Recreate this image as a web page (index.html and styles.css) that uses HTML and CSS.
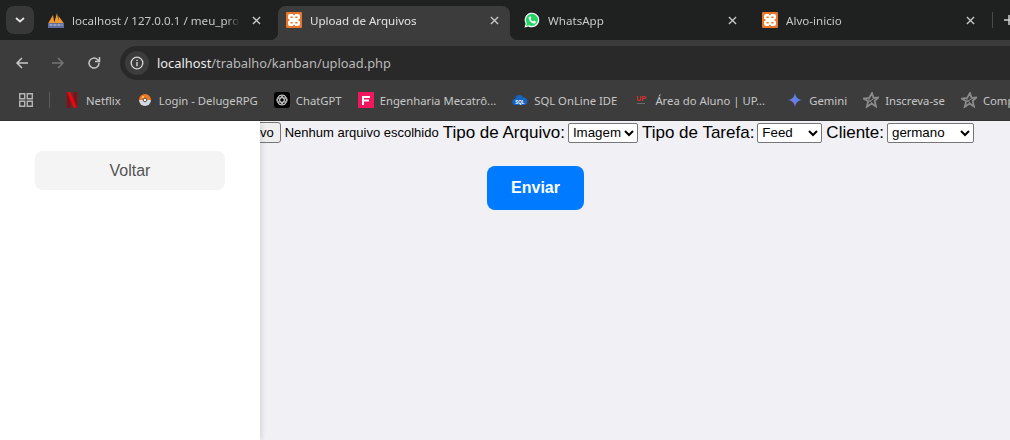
FILE: index.html
```html
<!DOCTYPE html>
<html lang="pt-BR">
<head>
    <meta charset="UTF-8">
    <meta name="viewport" content="width=device-width, initial-scale=1.0">
    <title>Upload de Arquivos</title>
    <link rel="stylesheet" href="styles.css">
</head>
<body>
    <svg class="defs" width="0" height="0">
        <symbol id="xampp" viewBox="0 0 16 16">
            <rect width="16" height="16" rx="1" fill="#e9762a"/>
            <path d="M4 2h2.500L8 3.500 9.500 2H12a2 2 0 0 1 2 2v2.500L12 8l2 1.500V12a2 2 0 0 1-2 2H9.500L8 12.500 6.500 14H4a2 2 0 0 1-2-2V9.500L4 8 2 6.500V4a2 2 0 0 1 2-2z" fill="#fff"/>
            <path d="M4.500 4.500h2.200v1.500H4.500zM9.300 4.500h2.200v1.500H9.300zM4.500 10h2.200v1.500H4.500zM9.300 10h2.200v1.500H9.300z" fill="#e9762a"/>
        </symbol>
        <symbol id="star" viewBox="0 0 16 16">
            <path d="M9 1l1.500 4.800 5-.3-3.800 3.400 1.300 5.600-4.500-3-4.800 3.500 1.500-5.700L.5 6.500l5.700-.5z" fill="none" stroke="#8a8a8a" stroke-width="1.800"/>
            <path d="M4.500 6l6.500 7M12 6L4.500 10.500" fill="none" stroke="#8a8a8a" stroke-width="1"/>
        </symbol>
        <symbol id="close" viewBox="0 0 10 10">
            <path d="M1 1l8 8M9 1L1 9" stroke="#c7c7c7" stroke-width="1.500"/>
        </symbol>
    </svg>

    <header class="browser">
        <div class="tabbar">
            <button class="tab-menu">
                <svg width="10" height="6" viewBox="0 0 10 6"><path d="M1 1l4 3.500L9 1" fill="none" stroke="#e3e3e3" stroke-width="1.800"/></svg>
            </button>
            <div class="tab">
                <svg class="icon" viewBox="0 0 16 16">
                    <path d="M0 11.500L5 3l1.500 8.500zM6 11.500L9 1l2 10.500zM10.500 11.500L10.500 4 16 11.500z" fill="#f39a2e"/>
                    <rect x="0" y="11" width="16" height="5" fill="#5f6d9e"/>
                    <path d="M1.500 13h13" stroke="#c9d2ea" stroke-width="1.200" stroke-dasharray="3 1"/>
                </svg>
                <span class="tab-title">localhost / 127.0.0.1 / meu_projeto</span>
                <svg class="tab-close"><use href="#close"/></svg>
            </div>
            <div class="tab tab-active">
                <svg class="icon"><use href="#xampp"/></svg>
                <span class="tab-title">Upload de Arquivos</span>
                <svg class="tab-close"><use href="#close"/></svg>
            </div>
            <div class="tab">
                <svg class="icon" viewBox="0 0 16 16">
                    <path d="M.5 15.500l1.100-3.900A7.300 7.300 0 1 1 4.500 14.400z" fill="#fff"/>
                    <path d="M2 14l.8-2.700A6.100 6.100 0 1 1 5 13.300z" fill="#25d366"/>
                    <path d="M5.800 4.500c-.5.200-1.200 1-1.100 2 .2 2 3 4.800 5 5 1 .1 1.800-.5 2-1.100l.1-.9-1.800-.9-.8 1c-1-.3-2.300-1.600-2.700-2.700l.8-.8-.8-1.800z" fill="#fff"/>
                </svg>
                <span class="tab-title">WhatsApp</span>
                <svg class="tab-close"><use href="#close"/></svg>
            </div>
            <div class="tab">
                <svg class="icon"><use href="#xampp"/></svg>
                <span class="tab-title">Alvo-inicio</span>
                <svg class="tab-close"><use href="#close"/></svg>
            </div>
            <span class="tab-sep"></span>
            <svg class="new-tab" width="10" height="10" viewBox="0 0 10 10"><path d="M5 0v10M0 5h10" stroke="#d0d0d0" stroke-width="1.500"/></svg>
        </div>

        <div class="toolbar">
            <svg class="nav-icon" viewBox="0 0 16 16"><path d="M14 8H3M8 3L3 8l5 5" fill="none" stroke="#c7c7c7" stroke-width="1.500"/></svg>
            <svg class="nav-icon" viewBox="0 0 16 16"><path d="M2 8h11M8 3l5 5-5 5" fill="none" stroke="#747474" stroke-width="1.500"/></svg>
            <svg class="nav-icon" viewBox="0 0 16 16"><path d="M13 8a5 5 0 1 1-1.500-3.500L13.500 6.500M13.500 2v4.500H9" fill="none" stroke="#c7c7c7" stroke-width="1.500"/></svg>
            <div class="omnibox">
                <span class="site-info">
                    <svg width="14" height="14" viewBox="0 0 14 14"><circle cx="7" cy="7" r="5.800" fill="none" stroke="#d8d8d8" stroke-width="1.300"/><path d="M7 6v4.200M7 3.700v1.300" stroke="#d8d8d8" stroke-width="1.400"/></svg>
                </span>
                <span class="url"><b>localhost</b>/trabalho/kanban/upload.php</span>
            </div>
        </div>

        <nav class="bookmarks">
            <svg class="apps" width="14" height="14" viewBox="0 0 14 14">
                <path d="M.7.700h5v5h-5zM8.300.700h5v5h-5zM.7 8.300h5v5h-5zM8.300 8.300h5v5h-5z" fill="none" stroke="#b5b5b5" stroke-width="1.400"/>
            </svg>
            <span class="bm-sep"></span>
            <div class="bm-list">
                <a class="bm">
                    <svg class="icon" viewBox="0 0 16 16"><path d="M3 0h3.500v16L3 15.500z" fill="#8f0b11"/><path d="M9.500 0H13v15.500L9.500 16z" fill="#8f0b11"/><path d="M3 0h3.500L13 15.500 9.500 16z" fill="#e50914"/></svg>
                    Netflix
                </a>
                <a class="bm">
                    <svg class="icon" viewBox="0 0 16 16"><path d="M2 8a6 6 0 0 1 12 0z" fill="#ee7b22"/><path d="M2 8a6 6 0 0 0 12 0z" fill="#d5d8e0"/><circle cx="8" cy="8" r="1.800" fill="#fff" stroke="#555"/><circle cx="6" cy="5" r="1" fill="#ffc98a"/></svg>
                    Login - DelugeRPG
                </a>
                <a class="bm">
                    <svg class="icon" viewBox="0 0 16 16"><rect width="16" height="16" rx="3" fill="#000"/><g fill="none" stroke="#c4c4c4" stroke-width="1"><circle cx="8" cy="8" r="5"/><ellipse cx="8" cy="8" rx="5" ry="2.200" transform="rotate(60 8 8)"/><ellipse cx="8" cy="8" rx="5" ry="2.200" transform="rotate(-60 8 8)"/><ellipse cx="8" cy="8" rx="5" ry="2.200"/></g></svg>
                    ChatGPT
                </a>
                <a class="bm">
                    <svg class="icon" viewBox="0 0 16 16"><rect width="16" height="16" fill="#f0175f"/><path d="M4 4h8v2H6v1.500h5v2H6V13H4z" fill="#fff"/></svg>
                    Engenharia Mecatrô...
                </a>
                <a class="bm">
                    <svg class="icon" viewBox="0 0 16 16"><path d="M3.500 13a3 3 0 0 1-.5-6A4.500 4.500 0 0 1 11.500 5.500 3.800 3.800 0 0 1 12.500 13z" fill="#1565c0"/><text class="sql-mark" x="8" y="11.500" text-anchor="middle">SQL</text></svg>
                    SQL OnLine IDE
                </a>
                <a class="bm">
                    <svg class="icon" viewBox="0 0 16 16"><text class="up-mark" x="8" y="9" text-anchor="middle">UP</text><path d="M4 11.500h8" stroke="#6b6b6b" stroke-width="1"/></svg>
                    Área do Aluno | UP...
                </a>
                <a class="bm bm-gemini">
                    <svg class="icon" viewBox="0 0 16 16"><defs><linearGradient id="gem" x1="0" y1="1" x2="1" y2="0"><stop offset="0" stop-color="#8b6fe0"/><stop offset="1" stop-color="#3f8cf0"/></linearGradient></defs><path d="M8 1c.5 3.800 2.700 6.400 7 7-4.300.6-6.500 3.200-7 7-.5-3.800-2.700-6.400-7-7 4.300-.6 6.500-3.200 7-7z" fill="url(#gem)"/></svg>
                    Gemini
                </a>
                <a class="bm"><svg class="icon"><use href="#star"/></svg>Inscreva-se</a>
                <a class="bm"><svg class="icon"><use href="#star"/></svg>Compras</a>
            </div>
        </nav>
    </header>

    <div class="page">
        <aside class="sidebar">
            <a class="back-btn">Voltar</a>
        </aside>
        <form class="upload-form">
            <div class="fields">
                <button type="button" class="file-btn">Escolher arquivo</button>
                <span class="file-name">Nenhum arquivo escolhido</span>
                <label>Tipo de Arquivo:</label>
                <select class="sel-type"><option>Imagem</option><option>Vídeo</option></select>
                <label>Tipo de Tarefa:</label>
                <select class="sel-task"><option>Feed</option><option>Story</option></select>
                <label>Cliente:</label>
                <select class="sel-client"><option>germano</option></select>
            </div>
            <button type="button" class="send-btn">Enviar</button>
        </form>
    </div>
</body>
</html>
```

FILE: styles.css
```css
* {
    box-sizing: border-box;
}

html, body {
    height: 100%;
}

body {
    margin: 0;
    height: 440px;
    overflow: hidden;
    display: flex;
    flex-direction: column;
    font-family: "Liberation Sans", Arial, sans-serif;
    background-color: #f0f0f5;
}

.defs {
    display: block;
    height: 0;
}

.icon {
    width: 16px;
    height: 16px;
    flex: none;
}

/* browser chrome */
.browser {
    flex: none;
    font-family: "Noto Sans", sans-serif;
    font-size: 11.3px;
    color: #c7c7c7;
}

.tabbar {
    height: 40px;
    background-color: #1f2120;
    display: flex;
    align-items: flex-end;
    overflow: hidden;
    padding-left: 6px;
}

.tab-menu {
    width: 28px;
    height: 28px;
    margin: 0 6px 6px 0;
    border: none;
    border-radius: 8px;
    background-color: #383838;
    display: flex;
    align-items: center;
    justify-content: center;
    flex: none;
    padding: 0;
}

.tab {
    position: relative;
    width: 238px;
    height: 34px;
    flex: none;
    display: flex;
    align-items: center;
    gap: 8px;
    padding: 0 17px 6px 8px;
}

.tab-title {
    flex: 1;
    font-size: 11.6px;
    white-space: nowrap;
    overflow: hidden;
    min-width: 0;
    -webkit-mask-image: linear-gradient(to left, transparent, #000 14px);
    mask-image: linear-gradient(to left, transparent, #000 14px);
}

.tab-close {
    width: 9px;
    height: 9px;
    flex: none;
    margin-left: 4px;
}

.tab-active {
    color: #e3e3e3;
}

/* tab shape is a bit narrower than its slot */
.tab-active::before {
    content: "";
    position: absolute;
    z-index: 0;
    left: 0;
    top: 0;
    width: 232px;
    height: 34px;
    border-radius: 8px 8px 0 0;
    background-color: #3c3c3c;
}

.tab-active::after {
    content: "";
    position: absolute;
    z-index: 0;
    left: -8px;
    bottom: 0;
    width: 248px;
    height: 8px;
    background:
        radial-gradient(circle at 0 0, transparent 8px, #3c3c3c 8.500px) left / 8px 8px no-repeat,
        radial-gradient(circle at 100% 0, transparent 8px, #3c3c3c 8.500px) right / 8px 8px no-repeat;
}

.tab-active > * {
    position: relative;
    z-index: 1;
}

.tab-sep {
    width: 1px;
    height: 16px;
    margin: 0 0 12px 0;
    background-color: #4a4a4a;
    flex: none;
}

.new-tab {
    flex: none;
    margin: 0 0 15px 11px;
}

.toolbar {
    height: 40px;
    background-color: #3c3c3c;
    padding: 6px 0 0 14px;
    display: flex;
    align-items: center;
    gap: 20px;
}

.nav-icon {
    width: 16px;
    height: 16px;
    flex: none;
}

.omnibox {
    flex: 1;
    height: 34px;
    margin-left: -2px;
    background-color: #292929;
    border-radius: 17px 0 0 17px;
    display: flex;
    align-items: center;
    padding-left: 5px;
    gap: 8px;
}

.site-info {
    width: 24px;
    height: 24px;
    border-radius: 50%;
    background-color: #3c3c3c;
    display: flex;
    align-items: center;
    justify-content: center;
}

.url {
    font-size: 12.85px;
    color: #b9b9b9;
}

.url b {
    font-weight: normal;
    color: #ececec;
}

.bookmarks {
    height: 41px;
    background-color: #3c3c3c;
    border-bottom: 1px solid #333;
    display: flex;
    align-items: center;
    padding-left: 19px;
    overflow: hidden;
}

.apps {
    flex: none;
}

.bm-sep {
    width: 1px;
    height: 16px;
    margin: 0 14px 0 16px;
    background-color: #5a5a5a;
    flex: none;
}

.bm-list {
    display: flex;
    align-items: center;
    gap: 16px;
    white-space: nowrap;
}

.bm {
    display: flex;
    align-items: center;
    gap: 6px;
    flex: none;
}

.bm-gemini {
    margin-left: 6px;
}

.sql-mark {
    font: bold 4.500px "Liberation Sans", sans-serif;
    fill: #fff;
}

.up-mark {
    font: bold 7px "Liberation Sans", sans-serif;
    fill: #d8322a;
}

/* page */
.page {
    position: relative;
    flex: 1;
    min-height: 0;
    overflow: hidden;
}

.sidebar {
    position: absolute;
    left: 0;
    top: 0;
    bottom: 0;
    width: 260px;
    padding: 30px 35px;
    background-color: #fff;
    box-shadow: 2px 0 5px rgba(0, 0, 0, 0.1);
}

.back-btn {
    display: block;
    height: 39px;
    line-height: 39px;
    text-align: center;
    font-size: 16px;
    color: #555;
    background-color: #f4f4f4;
    border-radius: 8px;
}

.upload-form {
    width: 877px;
    margin-left: 97px;
    padding-top: 1px;
}

.fields {
    display: flex;
    justify-content: flex-end;
    align-items: center;
    height: 21px;
    white-space: nowrap;
    font-size: 17px;
    color: #000;
}

.fields label {
    margin-right: 3px;
}

.file-btn {
    flex: none;
    font: 13px "Liberation Sans", sans-serif;
    height: 21px;
    margin-right: 4px;
    padding: 1px 6px;
    color: #000;
    background-color: #efefef;
    border: 1px solid #767676;
    border-radius: 3px;
}

.file-name {
    font-size: 13px;
    margin-right: 4px;
}

select {
    flex: none;
    font: 13.333px "Liberation Sans", sans-serif;
    height: 20px;
    margin-right: 4px;
    background-color: #fff;
    border: 1px solid #767676;
    border-radius: 2px;
}

.sel-type {
    width: 70px;
}

.sel-task {
    width: 65px;
}

.sel-client {
    width: 87px;
    margin-right: 0;
}

.send-btn {
    display: block;
    width: 97px;
    height: 44px;
    margin: 23px auto 0;
    border: none;
    border-radius: 8px;
    background-color: #007bff;
    color: #fff;
    font: bold 16px "Liberation Sans", sans-serif;
}
```
